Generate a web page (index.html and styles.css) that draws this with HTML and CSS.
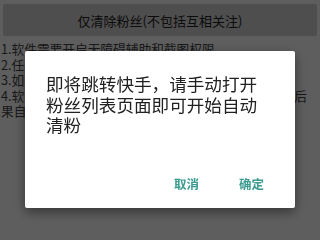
FILE: index.html
```html
<!DOCTYPE html>
<html lang="zh-CN">
<head>
    <meta charset="UTF-8">
    <meta name="viewport" content="width=device-width, initial-scale=1.0">
    <title>清粉助手</title>
    <link rel="stylesheet" href="styles.css">
</head>
<body>
    <div class="page">
        <button class="main-btn">仅清除粉丝(不包括互相关注)</button>

        <div class="tips">
            <p>1.软件需要开启无障碍辅助和截图权限</p>
            <p>2.任务开始后请保持屏幕常亮不要锁屏</p>
            <p>3.如果清粉中途停止可以重新点击开始</p>
            <p>4.软件运行期间请勿触碰屏幕,误操作导致的一切不良后果自负</p>
        </div>
    </div>

    <div class="overlay">
        <div class="dialog">
            <div class="dialog-msg">即将跳转快手，请手动打开粉丝列表页面即可开始自动清粉</div>
            <div class="dialog-actions">
                <button class="dialog-btn">取消</button>
                <button class="dialog-btn">确定</button>
            </div>
        </div>
    </div>
</body>
</html>
```

FILE: styles.css
```css
body {
    margin: 0;
    font-family: "Noto Sans CJK SC", "Noto Sans", sans-serif;
    background-color: #ffffff;
    width: 320px;
    height: 240px;
    overflow: hidden;
}
.page {
    padding: 4px 3px 0 3px;
}
.main-btn {
    display: block;
    width: 100%;
    height: 32px;
    border: none;
    border-radius: 2px;
    background-color: #d4d4d4;
    color: #222222;
    font-family: inherit;
    font-size: 13px;
    padding: 0;
}
.tips {
    margin: 5px 6px 0 -2px; /* texto pegado al borde izquierdo */
    color: #444444;
    font-size: 12.7px;
    line-height: 15.5px;
}
.tips p {
    margin: 0;
}

/* capa oscura del dialogo */
.overlay {
    position: fixed;
    top: 0;
    left: 0;
    right: 0;
    bottom: 0;
    background-color: rgba(0, 0, 0, 0.63);
    display: flex;
    justify-content: center;
    align-items: flex-start;
    padding-top: 51px;
}
.dialog {
    width: 270px;
    height: 157px;
    box-sizing: border-box;
    background-color: #ffffff;
    border-radius: 2px;
    box-shadow: 0 4px 12px rgba(0, 0, 0, 0.45);
    display: flex;
    flex-direction: column;
}
.dialog-msg {
    padding: 23px 24px 0 21px;
    font-size: 17.6px;
    line-height: 20.5px;
    color: #212121;
}
.dialog-actions {
    margin-top: auto;
    display: flex;
    justify-content: flex-end;
    padding: 0 11px 7px 0;
}
.dialog-btn {
    height: 36px;
    padding: 0 20px;
    border: none;
    background: none;
    font-family: inherit;
    font-size: 12.5px;
    font-weight: bold;
    color: #3a9b90;
}
```
